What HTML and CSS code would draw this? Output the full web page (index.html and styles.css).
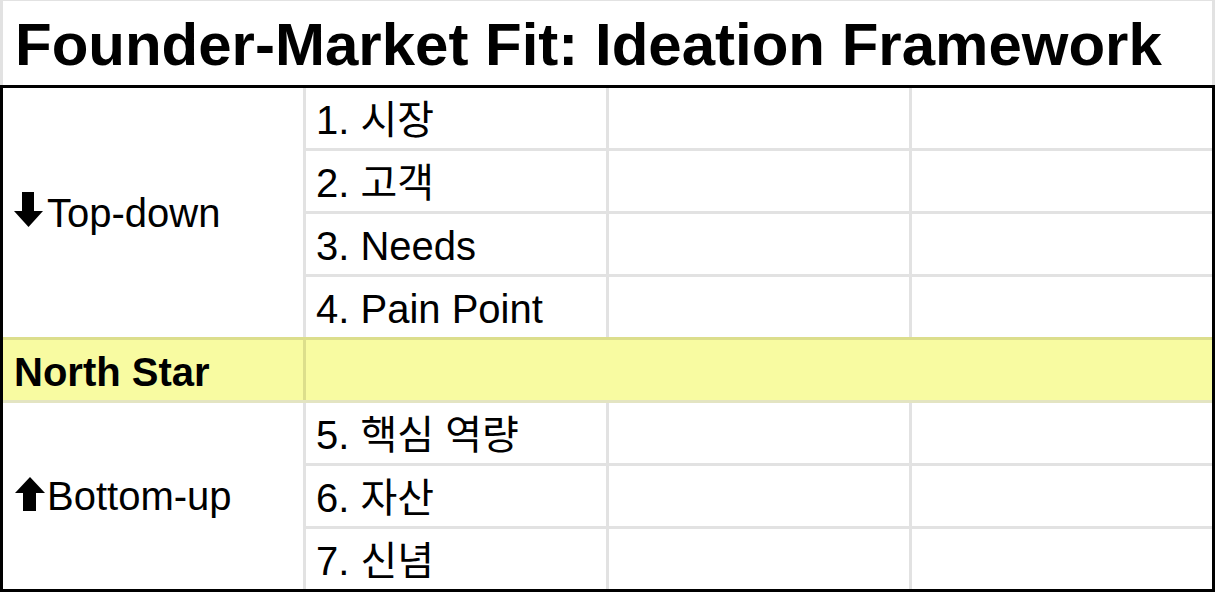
FILE: index.html
```html
<!DOCTYPE html>
<html lang="ko">
<head>
<meta charset="utf-8">
<title>Founder-Market Fit: Ideation Framework</title>
<link rel="stylesheet" href="styles.css">
</head>
<body>
<div class="sheet">
  <div class="title">Founder-Market Fit: Ideation Framework</div>
  <div class="grid">
    <div class="cell group group-top">
      <svg class="arrow" width="29" height="35" viewBox="0 0 29 35"><path d="M8 0H20V19H29L14.5 35L0 19H8Z" fill="#000"/></svg>
      <span>Top-down</span>
    </div>
    <div class="cell">1. 시장</div><div class="cell"></div><div class="cell"></div>
    <div class="cell">2. 고객</div><div class="cell"></div><div class="cell"></div>
    <div class="cell">3. Needs</div><div class="cell"></div><div class="cell"></div>
    <div class="cell">4. Pain Point</div><div class="cell"></div><div class="cell"></div>
    <div class="star-band"></div>
    <div class="cell star star-label">North Star</div>
    <div class="cell star star-value"></div>
    <div class="cell group group-bottom">
      <svg class="arrow" width="30" height="34" viewBox="0 0 30 34"><path d="M15 0L30 16H21V34H8V16H0Z" fill="#000"/></svg>
      <span>Bottom-up</span>
    </div>
    <div class="cell">5. 핵심 역량</div><div class="cell"></div><div class="cell"></div>
    <div class="cell">6. 자산</div><div class="cell"></div><div class="cell"></div>
    <div class="cell">7. 신념</div><div class="cell"></div><div class="cell"></div>
  </div>
</div>
</body>
</html>
```

FILE: styles.css
```css
html, body {
  margin: 0;
  padding: 0;
  background: #fff;
}

body {
  font-family: "Liberation Sans", Arial, "Noto Sans CJK KR", sans-serif;
  color: #000;
}

.sheet {
  width: 1215px;
  height: 592px;
  overflow: hidden;
}

.title {
  box-sizing: border-box;
  height: 85px;
  border-top: 1px solid #e2e2e2;
  border-left: 3px solid #e2e2e2;
  border-right: 3px solid #e2e2e2;
  padding: 9px 0 0 12px;
  font-size: 60px;
  line-height: 69px;
  font-weight: bold;
  white-space: nowrap;
}

.grid {
  display: grid;
  grid-template-columns: repeat(4, 300px);
  grid-template-rows: repeat(8, 60px);
  gap: 3px;
  background: #e2e2e2;
  border: 3px solid #000;
}

.cell {
  background: #fff;
  display: flex;
  align-items: flex-end;
  box-sizing: border-box;
  padding: 0 0 5px 10px;
  font-size: 40px;
  line-height: 46px;
  white-space: nowrap;
}

.group {
  grid-column: 1;
  align-items: center;
  padding: 0 0 0 11px;
}

.group-top {
  grid-row: 1 / span 4;
}

.group-bottom {
  grid-row: 6 / span 3;
}

.group span {
  margin-left: 4px;
}

.group-top .arrow {
  margin-top: -6px;
}

.group-bottom .arrow {
  margin-left: 1px;
  margin-top: -4px;
}

.group-bottom span {
  margin-left: 2px;
}

.star-band {
  grid-row: 5;
  grid-column: 1 / -1;
  margin: -3px 0 -3px 0;
  background: #dcde8c;
  border-bottom: 3px solid #e3e4c2;
}

.star {
  grid-row: 5;
  background: #f8fba1;
}

.star-label {
  grid-column: 1;
  font-weight: bold;
  padding-left: 11px;
}

.star-value {
  grid-column: 2 / -1;
}
```
